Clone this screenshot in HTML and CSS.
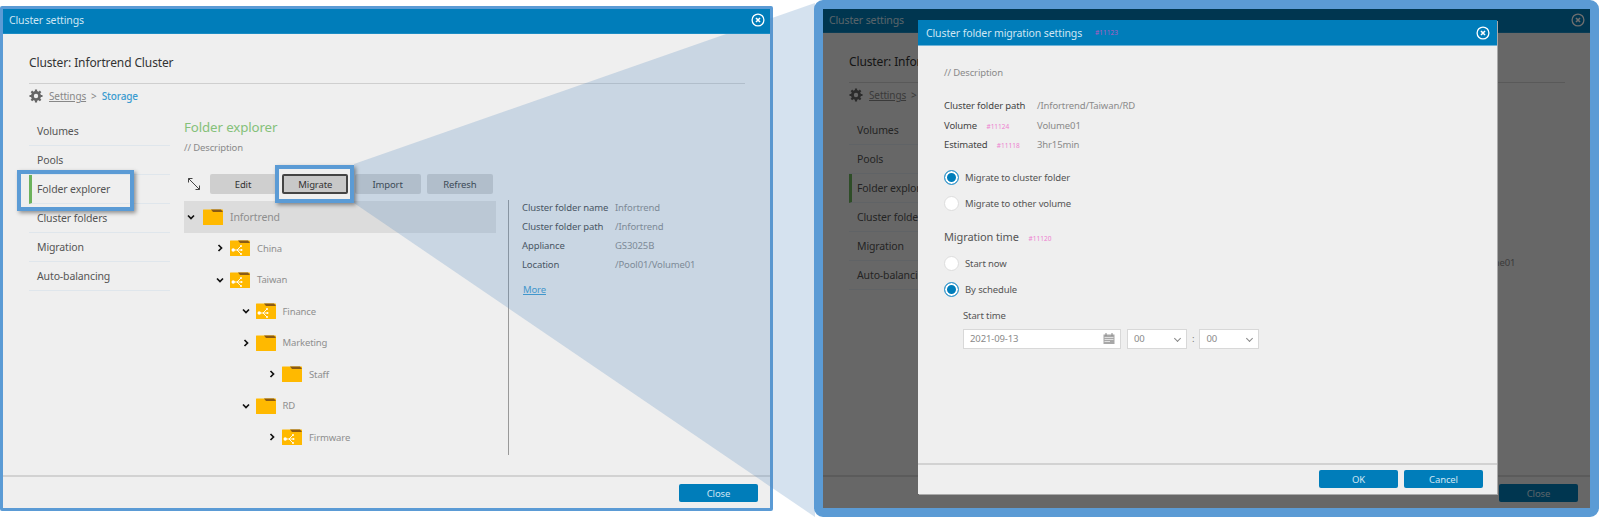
FILE: index.html
```html
<!DOCTYPE html>
<html lang="en">
<head>
    <meta charset="UTF-8" />
    <title>Cluster folder migration</title>
    <link rel="stylesheet" href="styles.css">
</head>
<body>
<svg class="defs" width="0" height="0">
    <symbol id="folder" viewBox="0 0 20 16">
        <rect x="0" y="0.5" width="20" height="15.5" rx="0.5" fill="#ffb900"/>
        <path d="M8 0.5 H18 L20 3 H10 Z" fill="#8a5a14"/>
        <path d="M0 2.5 H8 L9 3.2 H20 V4 H0 Z" fill="#ffb900"/>
    </symbol>
    <symbol id="folder-share" viewBox="0 0 20 16">
        <use href="#folder"/>
        <path d="M3 10 H7 L11 6 M7 10 L11 14 M7 10 H11" fill="none" stroke="#fff" stroke-width="0.9"/>
        <circle cx="3.2" cy="10" r="1.7" fill="#fff"/>
        <circle cx="11" cy="6" r="1" fill="#fff"/>
        <circle cx="11.5" cy="10" r="1" fill="#fff"/>
        <circle cx="11" cy="14" r="1" fill="#fff"/>
    </symbol>
    <symbol id="chev-down" viewBox="0 0 8 8">
        <path d="M1 2.5 L4 5.5 L7 2.5" fill="none" stroke="#111" stroke-width="1.7"/>
    </symbol>
    <symbol id="chev-right" viewBox="0 0 8 8">
        <path d="M2.5 1 L5.5 4 L2.5 7" fill="none" stroke="#111" stroke-width="1.7"/>
    </symbol>
    <symbol id="close" viewBox="0 0 14 14">
        <circle cx="7" cy="7" r="5.9" fill="none" stroke="#fff" stroke-width="1.3"/>
        <path d="M5 5 L9 9 M9 5 L5 9" stroke="#fff" stroke-width="1.6"/>
    </symbol>
    <symbol id="gear" viewBox="0 0 14 14">
        <circle cx="7" cy="7" r="3.6" fill="none" stroke="#666" stroke-width="2.8"/>
        <path d="M7 0.5 V13.5 M0.5 7 H13.5 M2.4 2.4 L11.6 11.6 M11.6 2.4 L2.4 11.6" stroke="#666" stroke-width="2.2" stroke-dasharray="2.4 8.2"/>
    </symbol>
    <symbol id="expand" viewBox="0 0 14 14">
        <path d="M1.5 1.5 L12.5 12.5 M1.5 5.5 V1.5 H5.5 M12.5 8.5 V12.5 H8.5" fill="none" stroke="#444" stroke-width="1"/>
    </symbol>
    <symbol id="calendar" viewBox="0 0 12 11">
        <rect x="0.5" y="1.5" width="11" height="9.5" fill="#a8a8a8"/>
        <path d="M3 0 V3 M9 0 V3" stroke="#8a8a8a" stroke-width="1"/>
        <path d="M1.5 4.5 H10.5 M1.5 6.5 H10.5 M1.5 8.5 H7" stroke="#eee" stroke-width="0.8"/>
    </symbol>
</svg>

<div class="stage">
    <section class="frame frame-front">
        <div class="panel">
            <header class="win-title">
                <span>Cluster settings</span>
                <svg class="close-icon"><use href="#close"/></svg>
            </header>
            <div class="win-body">
                <div class="cluster-name"><span>Cluster: Infortrend Cluster</span></div>
                <div class="crumbs">
                    <svg class="gear"><use href="#gear"/></svg>
                    <a class="crumb-link">Settings</a>
                    <span class="crumb-sep">&gt;</span>
                    <span class="crumb-now">Storage</span>
                </div>
                <div class="columns">
                    <ul class="side-nav">
                        <li>Volumes</li>
                        <li>Pools</li>
                        <li class="active">Folder explorer</li>
                        <li>Cluster folders</li>
                        <li>Migration</li>
                        <li>Auto-balancing</li>
                    </ul>
                    <div class="main">
                        <h2 class="main-title">Folder explorer</h2>
                        <div class="desc">// Description</div>
                        <div class="toolbar">
                            <svg class="expand"><use href="#expand"/></svg>
                            <button class="tool-btn">Edit</button>
                            <button class="tool-btn focused">Migrate</button>
                            <button class="tool-btn">Import</button>
                            <button class="tool-btn">Refresh</button>
                        </div>
                        <div class="split">
                            <div class="tree">
                                <div class="node root lvl0">
                                    <svg class="chev"><use href="#chev-down"/></svg>
                                    <svg class="folder"><use href="#folder"/></svg>
                                    <span>Infortrend</span>
                                </div>
                                <div class="node lvl1">
                                    <svg class="chev"><use href="#chev-right"/></svg>
                                    <svg class="folder"><use href="#folder-share"/></svg>
                                    <span>China</span>
                                </div>
                                <div class="node lvl1">
                                    <svg class="chev"><use href="#chev-down"/></svg>
                                    <svg class="folder"><use href="#folder-share"/></svg>
                                    <span>Taiwan</span>
                                </div>
                                <div class="node lvl2">
                                    <svg class="chev"><use href="#chev-down"/></svg>
                                    <svg class="folder"><use href="#folder-share"/></svg>
                                    <span>Finance</span>
                                </div>
                                <div class="node lvl2">
                                    <svg class="chev"><use href="#chev-right"/></svg>
                                    <svg class="folder"><use href="#folder"/></svg>
                                    <span>Marketing</span>
                                </div>
                                <div class="node lvl3">
                                    <svg class="chev"><use href="#chev-right"/></svg>
                                    <svg class="folder"><use href="#folder"/></svg>
                                    <span>Staff</span>
                                </div>
                                <div class="node lvl2">
                                    <svg class="chev"><use href="#chev-down"/></svg>
                                    <svg class="folder"><use href="#folder"/></svg>
                                    <span>RD</span>
                                </div>
                                <div class="node lvl3">
                                    <svg class="chev"><use href="#chev-right"/></svg>
                                    <svg class="folder"><use href="#folder-share"/></svg>
                                    <span>Firmware</span>
                                </div>
                            </div>
                            <div class="details">
                                <dl class="detail-list">
                                    <dt>Cluster folder name</dt><dd>Infortrend</dd>
                                    <dt>Cluster folder path</dt><dd>/Infortrend</dd>
                                    <dt>Appliance</dt><dd>GS3025B</dd>
                                    <dt>Location</dt><dd>/Pool01/Volume01</dd>
                                </dl>
                                <a class="more">More</a>
                            </div>
                        </div>
                    </div>
                </div>
            </div>
            <footer class="win-foot">
                <button class="primary-btn">Close</button>
            </footer>
        </div>
    </section>

    <section class="frame frame-back">
        <div class="panel">
            <header class="win-title">
                <span>Cluster settings</span>
                <svg class="close-icon"><use href="#close"/></svg>
            </header>
            <div class="win-body">
                <!-- only what shows around the dialog is kept in this back window -->
                <div class="cluster-name"><span>Cluster: Infortrend Cluster</span></div>
                <div class="crumbs">
                    <svg class="gear"><use href="#gear"/></svg>
                    <a class="crumb-link">Settings</a>
                    <span class="crumb-sep">&gt;</span>
                </div>
                <div class="columns">
                    <ul class="side-nav">
                        <li>Volumes</li>
                        <li>Pools</li>
                        <li class="active">Folder explorer</li>
                        <li>Cluster folders</li>
                        <li>Migration</li>
                        <li>Auto-balancing</li>
                    </ul>
                    <div class="main">
                        <div class="back-location">/Pool01/Volume01</div>
                    </div>
                </div>
            </div>
            <footer class="win-foot">
                <button class="primary-btn">Close</button>
            </footer>
            <div class="dim"></div>

            <div class="dialog">
                <header class="dlg-title">
                    <span>Cluster folder migration settings</span>
                    <span class="tag tag-title">#11123</span>
                    <svg class="close-icon"><use href="#close"/></svg>
                </header>
                <div class="dlg-body">
                    <div class="desc">// Description</div>
                    <div class="info">
                        <div class="info-key">Cluster folder path</div>
                        <div class="info-val">/Infortrend/Taiwan/RD</div>
                        <div class="info-key">Volume <span class="tag">#11124</span></div>
                        <div class="info-val">Volume01</div>
                        <div class="info-key">Estimated <span class="tag">#11118</span></div>
                        <div class="info-val">3hr15min</div>
                    </div>
                    <div class="radios">
                        <div class="radio on">Migrate to cluster folder</div>
                        <div class="radio">Migrate to other volume</div>
                    </div>
                    <h3 class="section-title">Migration time <span class="tag">#11120</span></h3>
                    <div class="radios tight">
                        <div class="radio">Start now</div>
                        <div class="radio on">By schedule</div>
                    </div>
                    <div class="schedule">
                        <div class="field-label">Start time</div>
                        <div class="field-row">
                            <div class="input date">2021-09-13 <svg class="cal"><use href="#calendar"/></svg></div>
                            <div class="input select">00</div>
                            <span class="colon">:</span>
                            <div class="input select">00</div>
                        </div>
                    </div>
                </div>
                <footer class="dlg-foot">
                    <button class="primary-btn">OK</button>
                    <button class="primary-btn">Cancel</button>
                </footer>
            </div>
        </div>
    </section>

    <!-- zoom wedge from the Migrate button to the dialog window -->
    <svg class="wedge" width="1599" height="517"><polygon points="354,164 815,3 815,517 354,203"/></svg>
    <div class="callout callout-nav"></div>
    <div class="callout callout-btn"></div>
</div>
</body>
</html>
```

FILE: styles.css
```css
* {
    box-sizing: border-box;
}

body {
    margin: 0;
    background: #fff;
    font-family: "Noto Sans", "Open Sans", sans-serif;
    font-size: 9.5px;
    letter-spacing: -0.12px;
    color: #444;
    overflow: hidden;
}

.defs {
    position: absolute;
}

.stage {
    position: relative;
    display: flex;
    align-items: flex-start;
    width: 1599px;
    height: 517px;
}

/* windows */
.frame {
    border-style: solid;
    border-color: #5b9bd5;
}

.frame-front {
    width: 773px;
    margin-top: 6px;
    border-width: 3px;
    border-radius: 2px;
}

.frame-back {
    position: relative;
    z-index: 3;
    width: 785px;
    margin-left: 41px;
    border-width: 9px;
    border-radius: 9px;
}

.panel {
    position: relative;
    display: flex;
    flex-direction: column;
    width: 767px;
    height: 499px;
    background: #efefef;
}

.win-title {
    display: flex;
    flex: none;
    align-items: center;
    justify-content: space-between;
    height: 25px;
    padding: 0 5px 2px 6px;
    background: #007dba;
    color: #cfe6f3;
    font-size: 10.5px;
    border-bottom: 1px solid #1a8cc4;
}

/* title bar stays clear of the wedge */
.frame-front .win-title {
    position: relative;
    z-index: 2;
}

.frame-back .win-title {
    height: 24px;
}

.close-icon {
    width: 14px;
    height: 14px;
}

.win-body {
    flex: 1;
    padding: 0 25px 0 26px;
}

.cluster-name {
    height: 50px;
    padding-top: 20px;
    border-bottom: 1px solid #cfcfcf;
    font-size: 12px;
    line-height: 17px;
    color: #333;
}

/* text runs under the dialog, so it is cut at the dialog edge */
.frame-back .cluster-name span {
    display: block;
    width: 69px;
    overflow: hidden;
    white-space: nowrap;
}

.crumbs {
    display: flex;
    align-items: center;
    gap: 5px;
    height: 24px;
    font-size: 10px;
    color: #888;
}

.gear {
    width: 14px;
    height: 14px;
    margin-right: 1px;
}

.crumb-link {
    text-decoration: underline;
}

.crumb-now {
    color: #3a9bd0;
    font-weight: 500;
}

.columns {
    display: flex;
    gap: 14px;
    margin-top: 9px;
}

/* side nav */
.side-nav {
    flex: none;
    width: 141px;
    margin: 0;
    padding: 0;
    list-style: none;
    font-size: 10.5px;
    color: #555;
}

.frame-back .side-nav {
    width: 69px;
    margin-right: 72px;
    overflow: hidden;
    white-space: nowrap;
}

.side-nav li {
    display: flex;
    align-items: center;
    height: 29px;
    padding-left: 8px;
    border-bottom: 1px solid #dfe6ec;
}

.side-nav .active {
    border-left: 3px solid #6cb25c;
    padding-left: 5px;
}

/* folder explorer */
.main {
    flex: 1;
    min-width: 0;
}

.main-title {
    margin: 0;
    height: 21px;
    font-size: 13.3px;
    font-weight: 400;
    line-height: 21px;
    color: #85c17a;
}

.desc {
    height: 14px;
    margin-top: 3px;
    line-height: 14px;
    color: #8a8a8a;
}

.back-location {
    margin-top: 140px;
    padding-left: 431px;
    line-height: 14px;
    white-space: nowrap;
    color: #8a8a8a;
}

.toolbar {
    display: flex;
    align-items: center;
    gap: 6.3px;
    height: 20px;
    margin-top: 19px;
}

.expand {
    width: 14px;
    height: 14px;
    margin: 0 2.7px 0 3px;
}

.tool-btn {
    width: 66px;
    height: 20px;
    padding: 0;
    border: none;
    border-radius: 2px;
    background: #cfcfcf;
    font: inherit;
    letter-spacing: inherit;
    color: #333;
}

.tool-btn.focused {
    border: 2px solid #444;
    background: #c8c8c8;
}

.split {
    display: flex;
    margin-top: 6px;
}

.tree {
    flex: none;
    width: 312px;
    margin: 1px 12px 0 0;
    color: #8e8e8e;
}

.node {
    display: flex;
    align-items: center;
    height: 31.5px;
}

.root {
    background: #dcdcdc;
    font-size: 10.5px;
}

.lvl0 { padding-left: 3px; }
.lvl1 { padding-left: 32px; }
.lvl2 { padding-left: 57.5px; }
.lvl3 { padding-left: 84px; }

.chev {
    width: 8px;
    height: 8px;
    margin-right: 6px;
}

.root .chev {
    margin-right: 8px;
}

.folder {
    width: 20px;
    height: 16px;
    margin-right: 7px;
}

.details {
    flex: 1;
    height: 255px;
    padding: 0 0 0 13px;
    border-left: 1px solid #999;
}

.detail-list {
    display: grid;
    grid-template-columns: 93px auto;
    grid-auto-rows: 19px;
    align-items: center;
    margin: -2px 0 0;
}

.detail-list dt {
    color: #444;
    white-space: nowrap;
}

.detail-list dd {
    margin: 0;
    color: #8a8a8a;
}

.more {
    display: block;
    margin: 9px 0 0 1px;
    color: #3a9bd0;
    text-decoration: underline;
}

.win-foot {
    display: flex;
    flex: none;
    justify-content: flex-end;
    align-items: flex-start;
    height: 33px;
    padding: 7px 12px 0 0;
    border-top: 2px solid #d2d2d2;
}

.primary-btn {
    width: 79px;
    height: 18px;
    padding: 0;
    border: none;
    border-radius: 2px;
    background: #007dba;
    font: inherit;
    letter-spacing: inherit;
    color: #cfe6f3;
}

/* dimmed backdrop + dialog */
.dim {
    position: absolute;
    inset: 0;
    background: rgba(0, 0, 0, 0.57);
}

.dialog {
    position: absolute;
    left: 95px;
    top: 11px;
    display: flex;
    flex-direction: column;
    width: 579px;
    height: 474px;
    background: #efefef;
    box-shadow: 1px 1px 0 #aaa;
}

.dlg-title {
    display: flex;
    flex: none;
    align-items: center;
    height: 26px;
    padding: 0 7px 0 8px;
    background: #007dba;
    border-bottom: 1px solid #6fb3d8;
    color: #cfe6f3;
    font-size: 10.5px;
}

.tag {
    margin-left: 7px;
    font-size: 6.5px;
    font-weight: 400;
    letter-spacing: 0;
    color: #ee7fd0;
}

.tag-title {
    margin-left: 13px;
    color: #b05bc0;
}

.dlg-title .close-icon {
    margin-left: auto;
}

.dlg-body {
    flex: 1;
    padding: 20px 0 0 26px;
}

.dlg-body .desc {
    margin-top: 0;
}

.info {
    display: grid;
    grid-template-columns: 93px auto;
    grid-auto-rows: 19.5px;
    align-items: center;
    margin-top: 16px;
}

.info-key {
    color: #444;
    white-space: nowrap;
}

.info-val {
    color: #8a8a8a;
}

.radios {
    margin-top: 10px;
}

.radios.tight {
    margin-top: 4px;
}

.radio {
    display: flex;
    align-items: center;
    height: 26px;
    gap: 6px;
    color: #555;
}

.radio::before {
    content: "";
    flex: none;
    width: 13px;
    height: 13px;
    border: 1px solid #ddd;
    border-radius: 50%;
    background: #fff;
}

.radio.on::before {
    border: 1px solid #3d9bd0;
    background: #007dba;
    box-shadow: inset 0 0 0 2px #fff;
}

.section-title {
    height: 20px;
    margin: 10px 0 0;
    font-size: 11px;
    font-weight: 400;
    line-height: 20px;
    color: #555;
}

.schedule {
    margin: 6px 0 0 19px;
}

.field-label {
    height: 14px;
    line-height: 14px;
    color: #555;
}

.field-row {
    display: flex;
    align-items: center;
    gap: 6px;
    margin-top: 6px;
}

.input {
    position: relative;
    display: flex;
    align-items: center;
    height: 20px;
    padding-left: 6px;
    border: 1px solid #d8d8d8;
    background: #fff;
    color: #8a8a8a;
}

.date {
    width: 158px;
}

.cal {
    position: absolute;
    right: 5px;
    top: 3.5px;
    width: 12px;
    height: 11px;
}

.select {
    width: 60px;
}

.select::after {
    content: "";
    position: absolute;
    right: 6px;
    top: 6px;
    width: 4px;
    height: 4px;
    border-right: 1px solid #888;
    border-bottom: 1px solid #888;
    transform: rotate(45deg);
}

.colon {
    margin: 0 -1px;
    color: #777;
}

.dlg-foot {
    display: flex;
    flex: none;
    justify-content: flex-end;
    gap: 6px;
    height: 31px;
    padding: 5px 14px 0 0;
    border-top: 2px solid #d2d2d2;
}

/* overlays on the left window */
.wedge {
    position: absolute;
    left: 0;
    top: 0;
    z-index: 1;
    pointer-events: none;
}

.wedge polygon {
    fill: rgba(87, 139, 191, 0.25);
}

.callout {
    position: absolute;
    z-index: 2;
    border: 4px solid #5b9bd5;
    box-shadow: 2px 2px 4px rgba(0, 0, 0, 0.4);
}

.callout-nav {
    left: 17px;
    top: 170px;
    width: 117px;
    height: 41px;
}

.callout-btn {
    left: 275px;
    top: 165px;
    width: 79px;
    height: 38px;
}
```
